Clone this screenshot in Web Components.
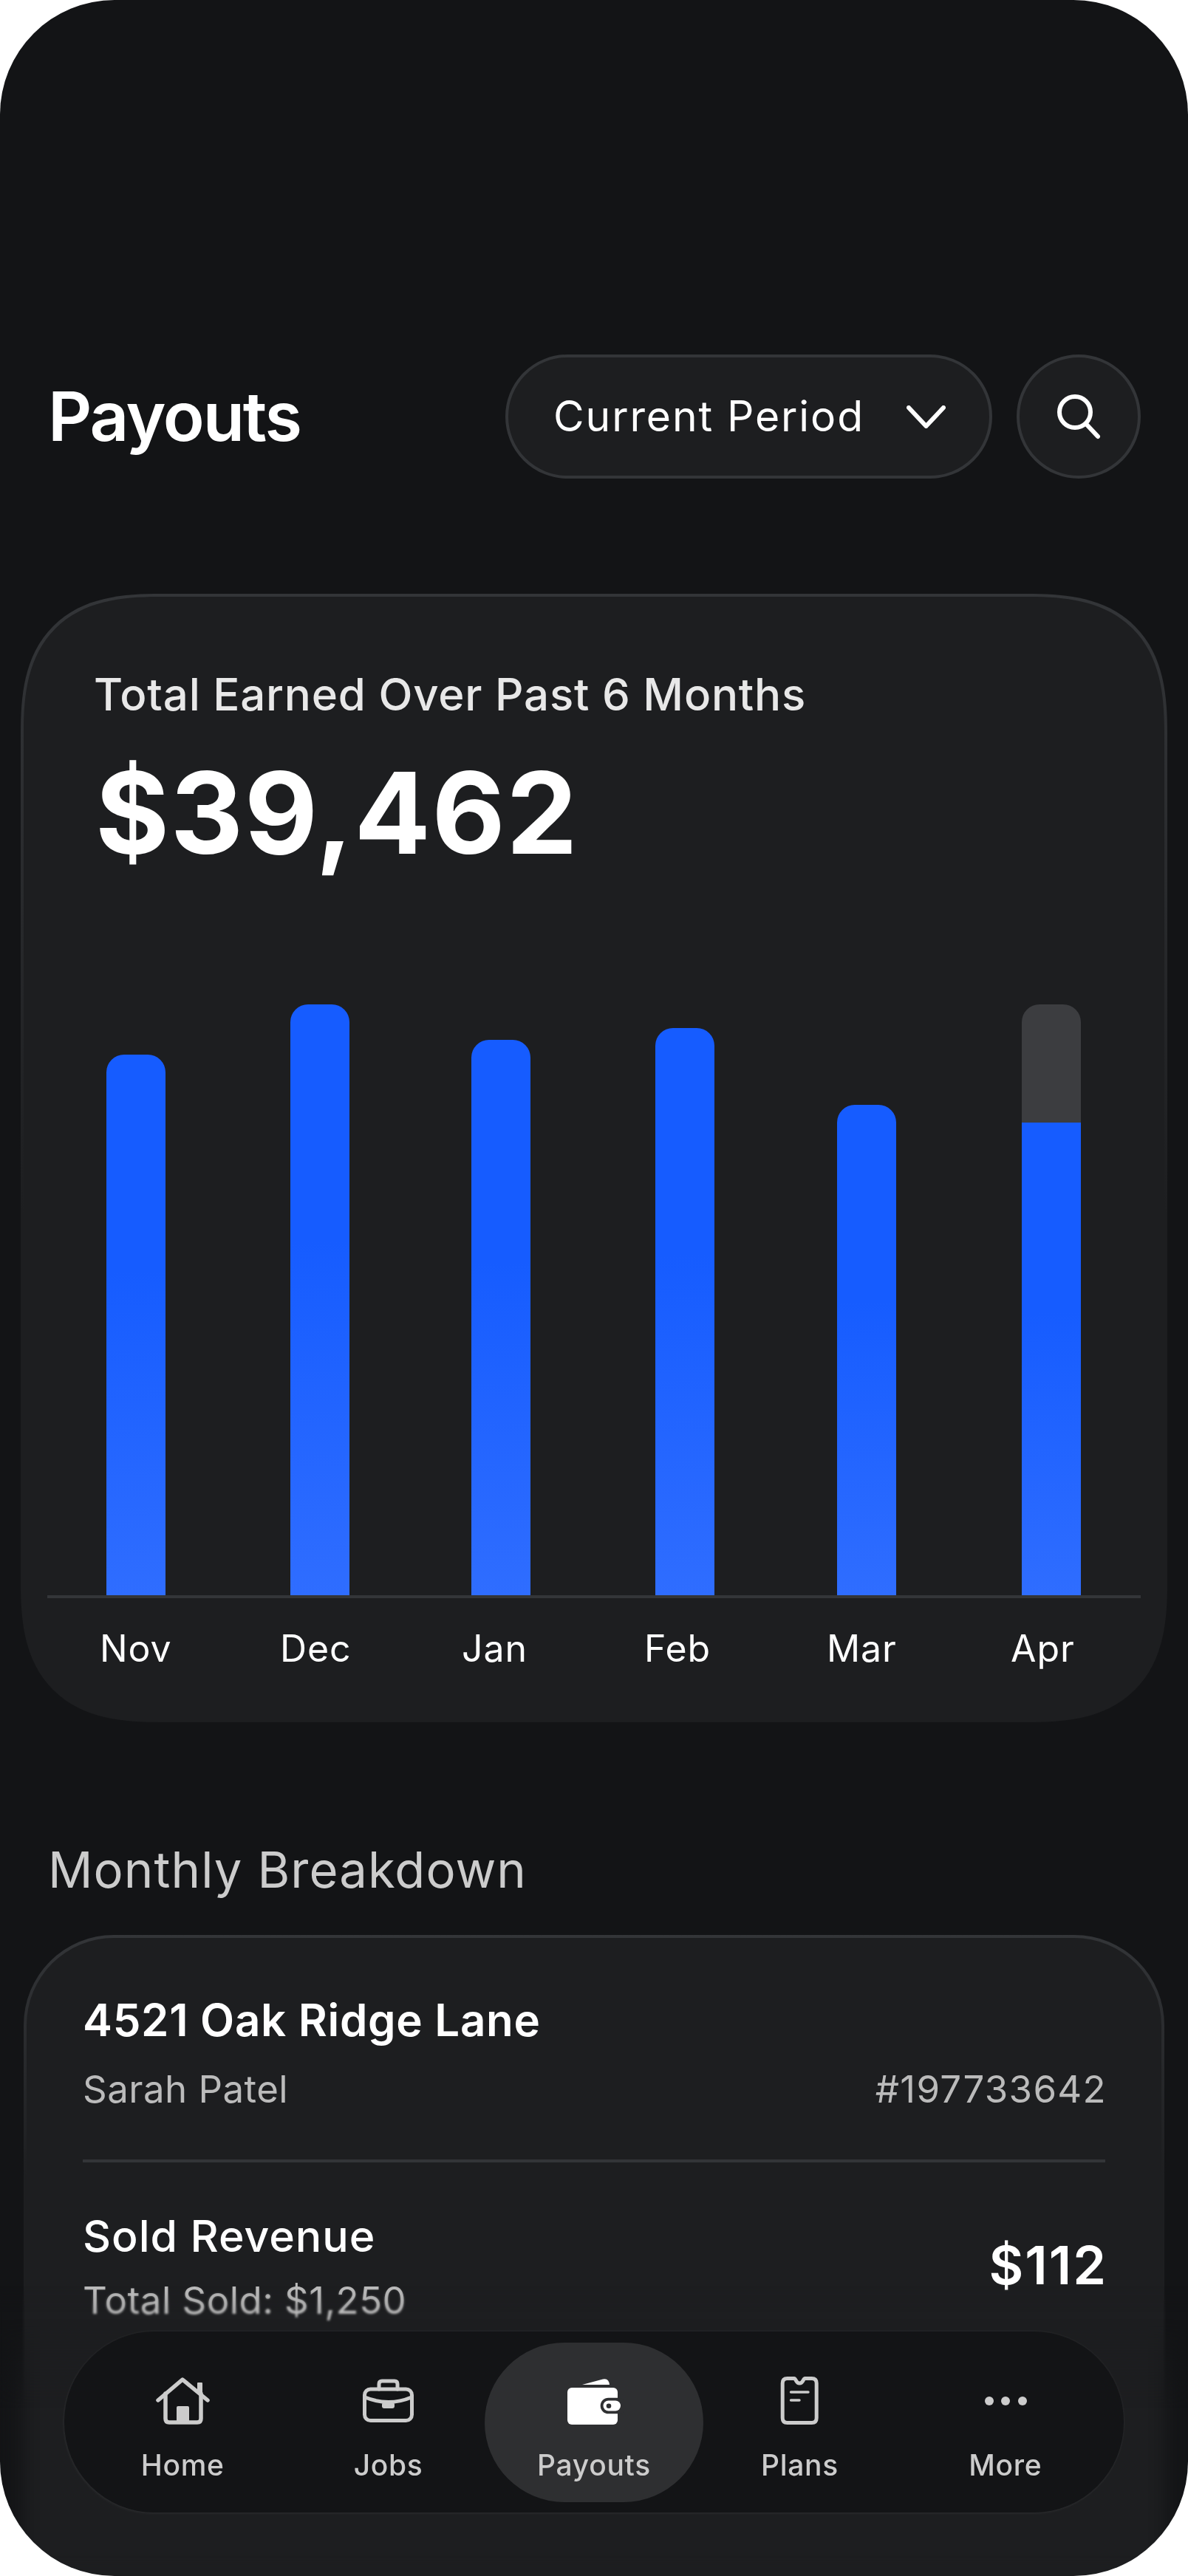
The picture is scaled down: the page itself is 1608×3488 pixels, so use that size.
<!DOCTYPE html>
<html lang="en">
<head>
<meta charset="utf-8">
<title>Payouts</title>
<style>
    html, body { margin: 0; padding: 0; background: #fff; }
    body { font-family: Inter, "Liberation Sans", sans-serif; }
</style>
</head>
<body>
<app-screen>
    <page-header slot="header" title="Payouts" period="Current Period"></page-header>
    <earnings-card slot="main" label="Total Earned Over Past 6 Months" amount="$39,462"></earnings-card>
    <breakdown-card slot="main" heading="Monthly Breakdown"></breakdown-card>
    <bottom-nav slot="nav"></bottom-nav>
</app-screen>
<script>
class AppScreen extends HTMLElement {
    constructor() {
        super();
        this.attachShadow({ mode: 'open' });
        this.shadowRoot.innerHTML = `
            <style>
                :host {
                    display: flex;
                    flex-direction: column;
                    position: relative;
                    width: 1608px;
                    height: 3488px;
                    overflow: hidden;
                    box-sizing: border-box;
                    padding-top: 480px;
                    background: #131416;
                    color: #fff;
                }

                .soft, .heavy {
                    position: absolute;
                    left: 0;
                    right: 0;
                    bottom: 0;
                }

                .soft {
                    top: 3096px;
                    backdrop-filter: blur(1.6px);
                    -webkit-mask-image: linear-gradient(transparent, #000 34px);
                    mask-image: linear-gradient(transparent, #000 34px);
                }

                .heavy {
                    top: 3140px;
                    backdrop-filter: blur(14px);
                    -webkit-mask-image: linear-gradient(transparent, #000 120px);
                    mask-image: linear-gradient(transparent, #000 120px);
                }

                /* white page corners go on top so the blur never samples them */
                .corners {
                    position: absolute;
                    inset: 0;
                    border-radius: 155px;
                    box-shadow: 0 0 0 160px #fff;
                    pointer-events: none;
                }

                ::slotted(*) {
                    flex: none;
                }

                ::slotted(bottom-nav) {
                    position: absolute;
                    left: 87px;
                    top: 3157px;
                }
            </style>
            <slot name="header"></slot>
            <slot name="main"></slot>
            <div class="soft"></div>
            <div class="heavy"></div>
            <slot name="nav"></slot>
            <div class="corners"></div>
        `;
    }
}

customElements.define('app-screen', AppScreen);


class PageHeader extends HTMLElement {
    constructor() {
        super();
        this.attachShadow({ mode: 'open' });
        this.shadowRoot.innerHTML = `
            <style>
                :host {
                    display: flex;
                    align-items: center;
                    height: 168px;
                    padding: 0 64px 0 65px;
                }

                h1 {
                    flex: 1;
                    margin: 0;
                    font-size: 92px;
                    line-height: 110px;
                    font-weight: 600;
                    letter-spacing: -2.15px;
                }

                .pill {
                    display: flex;
                    align-items: center;
                    box-sizing: border-box;
                    width: 659px;
                    height: 168px;
                    padding-left: 61px;
                    background: #1d1e20;
                    border: 4px solid #333538;
                    border-radius: 84px;
                    font-size: 57px;
                    line-height: 68px;
                    letter-spacing: 1.9px;
                }

                .pill svg {
                    margin-left: 57px;
                }

                .round {
                    display: flex;
                    align-items: center;
                    justify-content: center;
                    box-sizing: border-box;
                    width: 168px;
                    height: 168px;
                    margin-left: 33px;
                    background: #1d1e20;
                    border: 4px solid #333538;
                    border-radius: 50%;
                }
            </style>
            <h1></h1>
            <div class="pill">
                <span></span>
                <svg width="53" height="31" viewBox="0 0 53 31" fill="none" stroke="#fff" stroke-width="6" stroke-linecap="round" stroke-linejoin="round">
                    <path d="M3 3 L26.5 28 L50 3"/>
                </svg>
            </div>
            <div class="round">
                <svg width="62" height="62" viewBox="0 0 62 62" fill="none" stroke="#fff" stroke-width="6" stroke-linecap="round">
                    <circle cx="26" cy="25" r="21"/>
                    <path d="M41 41 L57 58"/>
                </svg>
            </div>
        `;
        this.shadowRoot.querySelector('h1').textContent = this.getAttribute('title');
        this.shadowRoot.querySelector('.pill span').textContent = this.getAttribute('period');
    }
}

customElements.define('page-header', PageHeader);


class BarChart extends HTMLElement {
    #bars = [
        { month: 'Nov', height: 732 },
        { month: 'Dec', height: 800 },
        { month: 'Jan', height: 752 },
        { month: 'Feb', height: 768 },
        { month: 'Mar', height: 664 },
        { month: 'Apr', height: 800, paid: 640 }
    ];

    constructor() {
        super();
        this.attachShadow({ mode: 'open' });
        this.shadowRoot.innerHTML = `
            <style>
                :host {
                    display: block;
                    margin: 0 32px;
                }

                .plot {
                    display: grid;
                    grid-template-columns: 249px 245px 249px 246px 250px 80px;
                    align-items: end;
                    height: 800px;
                    padding-left: 80px;
                    border-bottom: 4px solid #333538;
                }

                .bar {
                    display: flex;
                    align-items: flex-end;
                    width: 80px;
                    overflow: hidden;
                    background: #3c3d40;
                    border-radius: 24px 24px 0 0;
                }

                .fill {
                    width: 100%;
                    background: linear-gradient(#165cff 40%, #2f6dff);
                }

                .months {
                    display: grid;
                    grid-template-columns: 244px 246px 247px 247px 249px auto;
                    padding: 39px 0 0 71px;
                    font-size: 50px;
                    line-height: 58px;
                    letter-spacing: 0.9px;
                }
            </style>
            <div class="plot"></div>
            <div class="months"></div>
        `;

        const plot = this.shadowRoot.querySelector('.plot');
        const months = this.shadowRoot.querySelector('.months');

        for(const { month, height, paid } of this.#bars) {
            const bar = document.createElement('div');
            bar.className = 'bar';
            bar.style.height = height + 'px';

            const fill = document.createElement('div');
            fill.className = 'fill';
            fill.style.height = (paid ?? height) + 'px';
            bar.appendChild(fill);
            plot.appendChild(bar);

            const label = document.createElement('span');
            label.textContent = month;
            months.appendChild(label);
        }
    }
}

customElements.define('bar-chart', BarChart);


class EarningsCard extends HTMLElement {
    constructor() {
        super();
        this.attachShadow({ mode: 'open' });
        this.shadowRoot.innerHTML = `
            <style>
                :host {
                    display: block;
                    box-sizing: border-box;
                    height: 1528px;
                    margin: 156px 28px 0;
                    padding-top: 96px;
                    border: 4px solid transparent;
                    border-radius: 150px;
                    background:
                        linear-gradient(#1d1e20, #1d1e20) padding-box,
                        linear-gradient(#333538, #1d1e20 55%) border-box;
                }

                @supports (corner-shape: squircle) {
                    :host {
                        border-radius: 190px;
                        corner-shape: superellipse(1.4);
                    }
                }

                .label {
                    padding-left: 95px;
                    font-size: 60px;
                    line-height: 72px;
                    font-weight: 500;
                    letter-spacing: 0.78px;
                    color: #e8e8e8;
                }

                .amount {
                    height: 334px;
                    margin-top: 50px;
                    padding-left: 97px;
                    font-size: 153px;
                    line-height: 150px;
                    font-weight: 700;
                    letter-spacing: 1.4px;
                }
            </style>
            <div class="label"></div>
            <div class="amount"></div>
            <bar-chart></bar-chart>
        `;
        this.shadowRoot.querySelector('.label').textContent = this.getAttribute('label');
        this.shadowRoot.querySelector('.amount').textContent = this.getAttribute('amount');
    }
}

customElements.define('earnings-card', EarningsCard);


class BreakdownCard extends HTMLElement {
    constructor() {
        super();
        this.attachShadow({ mode: 'open' });
        this.shadowRoot.innerHTML = `
            <style>
                :host {
                    display: block;
                }

                h2 {
                    margin: 0;
                    padding: 160px 0 0 65px;
                    font-size: 67px;
                    line-height: 80px;
                    font-weight: 400;
                    letter-spacing: 1.07px;
                    color: #ccc;
                }

                .card {
                    box-sizing: border-box;
                    height: 1100px;
                    margin: 48px 32px 0;
                    padding: 76px 76px 0;
                    border: 4px solid transparent;
                    border-radius: 122px;
                    background:
                        linear-gradient(#1d1e20, #1d1e20) padding-box,
                        linear-gradient(#333538, #1d1e20 30%) border-box;
                }

                .top, .row {
                    display: flex;
                    justify-content: space-between;
                }

                .top {
                    padding-bottom: 65px;
                    border-bottom: 4px solid #333538;
                }

                .address {
                    font-size: 60px;
                    line-height: 70px;
                    font-weight: 600;
                    letter-spacing: 0.7px;
                }

                .muted {
                    margin-top: 29px;
                    font-size: 51px;
                    line-height: 60px;
                    letter-spacing: 0.45px;
                    color: #bbb;
                }

                .id {
                    align-self: flex-end;
                    margin-right: -2px;
                    font-size: 51px;
                    line-height: 60px;
                    letter-spacing: 1.3px;
                    color: #bbb;
                }

                .row {
                    align-items: center;
                    padding-top: 66px;
                }

                .title {
                    font-size: 59px;
                    line-height: 68px;
                    font-weight: 500;
                    letter-spacing: 0.95px;
                }

                .row .muted {
                    margin-top: 23px;
                }

                .sum {
                    margin: 0 -3px 6px 0;
                    font-size: 72px;
                    line-height: 84px;
                    font-weight: 600;
                    letter-spacing: 2px;
                }
            </style>
            <h2></h2>
            <div class="card">
                <div class="top">
                    <div>
                        <div class="address">4521 Oak Ridge Lane</div>
                        <div class="muted">Sarah Patel</div>
                    </div>
                    <div class="id">#197733642</div>
                </div>
                <div class="row">
                    <div>
                        <div class="title">Sold Revenue</div>
                        <div class="muted">Total Sold: $1,250</div>
                    </div>
                    <div class="sum">$112</div>
                </div>
            </div>
        `;
        this.shadowRoot.querySelector('h2').textContent = this.getAttribute('heading');
    }
}

customElements.define('breakdown-card', BreakdownCard);


class NavItem extends HTMLElement {
    constructor() {
        super();
        this.attachShadow({ mode: 'open' });
        this.shadowRoot.innerHTML = `
            <style>
                :host {
                    display: flex;
                    flex-direction: column;
                    align-items: center;
                    height: 216px;
                    padding-top: 44px;
                    box-sizing: border-box;
                    border-radius: 108px;
                }

                :host([active]) {
                    margin: 0 -9px;
                    background: #2e2f31;
                }

                span {
                    margin-top: 29px;
                    font-size: 39px;
                    line-height: 46px;
                    font-weight: 500;
                    letter-spacing: 0.7px;
                    color: #ccc;
                }
            </style>
            <slot></slot>
            <span></span>
        `;
        this.shadowRoot.querySelector('span').textContent = this.getAttribute('label');
    }
}

customElements.define('nav-item', NavItem);


class BottomNav extends HTMLElement {
    constructor() {
        super();
        this.attachShadow({ mode: 'open' });
        this.shadowRoot.innerHTML = `
            <style>
                :host {
                    display: grid;
                    grid-template-columns: repeat(5, 1fr);
                    box-sizing: border-box;
                    width: 1434px;
                    height: 245px;
                    padding: 15px 21px 0;
                    background: #131416;
                    border-radius: 122px;
                    box-shadow: 0 0 0 2px rgba(255, 255, 255, 0.02), -1px 2px 4px rgba(255, 255, 255, 0.04);
                }

                svg {
                    display: block;
                    width: 80px;
                    height: 70px;
                }
            </style>
            <nav-item label="Home">
                <svg viewBox="0 0 80 70" fill="none" stroke="#ccc" stroke-width="5.5" stroke-linecap="round" stroke-linejoin="round">
                    <path d="M7 34 L40 6 L74 34"/>
                    <path d="M17 25 V59 Q17 64 22 64 H60 Q65 64 65 59 V25"/>
                    <rect x="60" y="10" width="7" height="15" fill="#ccc" stroke="none" rx="1"/>
                    <rect x="32" y="42" width="17" height="22" fill="#ccc" stroke="none" rx="2"/>
                </svg>
            </nav-item>
            <nav-item label="Jobs">
                <svg viewBox="0 0 80 70" fill="none" stroke="#ccc" stroke-width="5" stroke-linecap="round">
                    <rect x="7.5" y="19" width="64" height="42.5" rx="8"/>
                    <path d="M27 19 V12 Q27 8 31 8 H48 Q52 8 52 12 V19"/>
                    <path d="M8 30 Q40 43 71 30"/>
                    <rect x="31" y="37" width="17" height="8" rx="3" fill="#ccc" stroke="none"/>
                </svg>
            </nav-item>
            <nav-item label="Payouts" active>
                <svg viewBox="0 0 80 70">
                    <rect x="4" y="17" width="68" height="50" rx="6" fill="#fff"/>
                    <path d="M24 13 L52 5.5 Q60 3.5 61 13 Z" fill="#fff"/>
                    <rect x="48.7" y="30.7" width="35" height="21.6" rx="10.8" fill="#2e2f31"/>
                    <rect x="52.5" y="34.5" width="23.5" height="14" rx="7" fill="#fff"/>
                    <circle cx="60" cy="41.7" r="3.3" fill="#2e2f31"/>
                </svg>
            </nav-item>
            <nav-item label="Plans">
                <svg viewBox="0 0 80 70" fill="none" stroke="#ccc" stroke-width="5" stroke-linecap="round">
                    <path d="M17.2 11 Q17.2 4.5 23.7 4.5 H33 C35.5 4.5 35 11 40.2 11 S45 4.5 47.5 4.5 H56.7 Q63.2 4.5 63.2 11 V58 Q63.2 64.5 56.7 64.5 H23.7 Q17.2 64.5 17.2 58 Z"/>
                    <path d="M28.5 23 H52" stroke-width="3.4"/>
                    <path d="M28.5 34 H40" stroke-width="3.4"/>
                </svg>
            </nav-item>
            <nav-item label="More">
                <svg viewBox="0 0 80 70" fill="#ccc">
                    <circle cx="18" cy="35" r="6"/>
                    <circle cx="40" cy="35" r="6"/>
                    <circle cx="63" cy="35" r="6"/>
                </svg>
            </nav-item>
        `;
    }
}

customElements.define('bottom-nav', BottomNav);
</script>
</body>
</html>
